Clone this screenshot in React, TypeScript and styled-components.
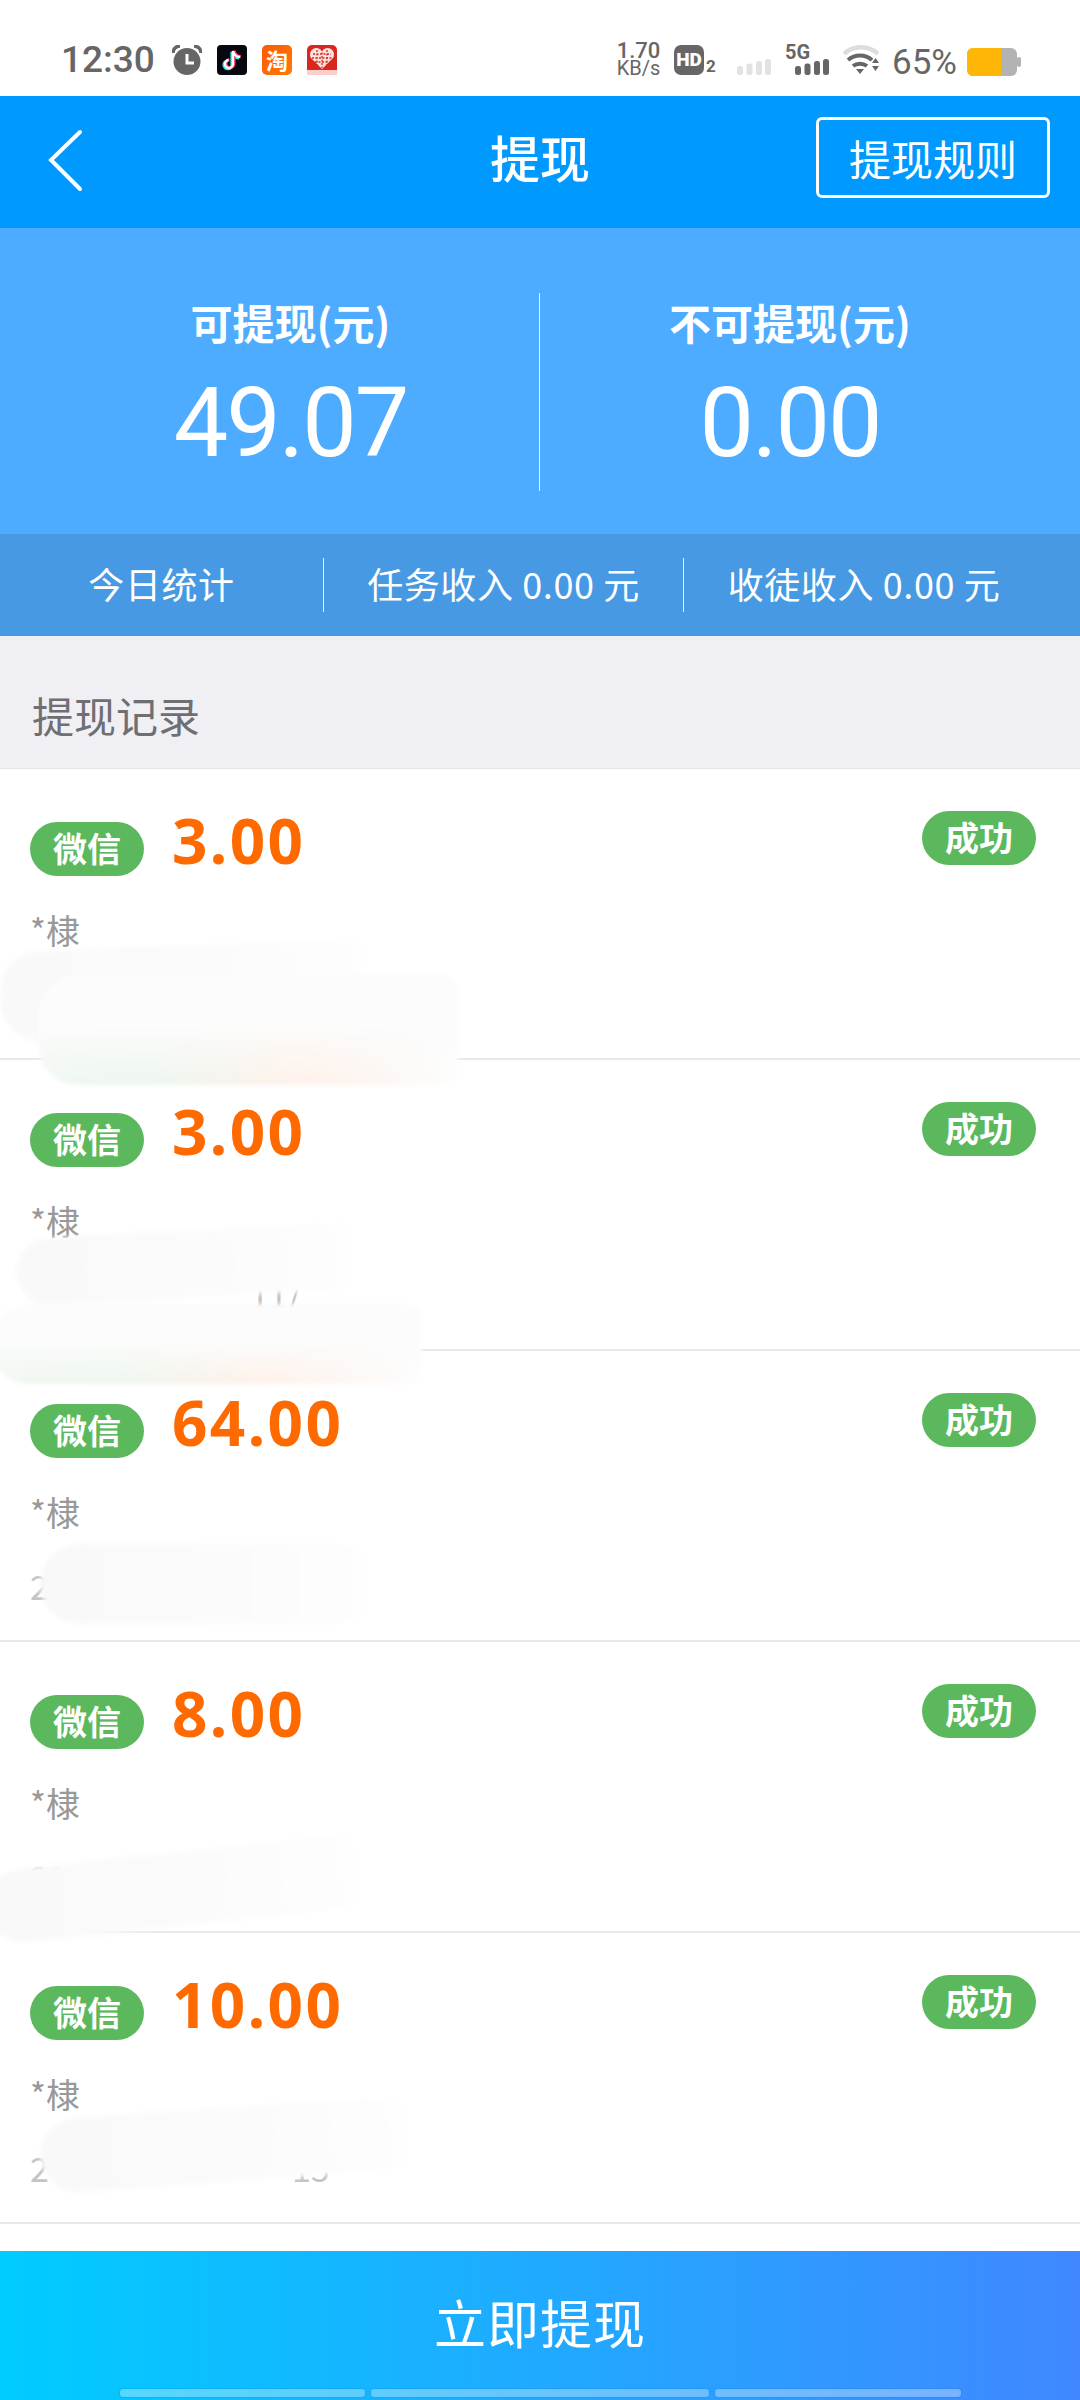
import styled, { createGlobalStyle } from "styled-components";

const CJK = `"Noto Sans CJK SC", "Noto Sans", sans-serif`;

const GlobalStyle = createGlobalStyle`
  html, body {
    margin: 0;
    padding: 0;
    background: #fff;
    font-family: ${CJK};
  }
  * { box-sizing: border-box; }
`;

const Page = styled.div`
  width: 1080px;
  height: 2400px;
  display: flex;
  flex-direction: column;
  overflow: hidden;
  background: #fff;
  position: relative;
`;

/* status bar */
const StatusBar = styled.div`
  height: 96px;
  padding: 45px 59px 0 61px;
  display: flex;
  align-items: flex-start;
  justify-content: space-between;
  color: #666;
`;

const StatusGroup = styled.div`
  height: 30px;
  display: flex;
  align-items: center;
`;

const Clock = styled.span`
  font: 500 37px/30px "Roboto", sans-serif;
  width: 111px;
`;

const Speed = styled.div`
  width: 45px;
  margin: -3px 13px 0 0;
  display: flex;
  flex-direction: column;
  align-items: center;
`;

const SpeedValue = styled.span`
  font: 500 22px/19px "Roboto", sans-serif;
`;

const SpeedUnit = styled.span`
  font: 400 20px/17px "Roboto", sans-serif;
`;

const HdWrap = styled.div`
  width: 42px;
  height: 30px;
  margin-right: 21px;
  display: flex;
`;

const HdBox = styled.div`
  width: 30px;
  height: 30px;
  border-radius: 7px;
  background: #666;
  color: #fff;
  font: 900 19px/30px "Roboto", sans-serif;
  text-align: center;
`;

const HdSub = styled.span`
  align-self: flex-end;
  font: 700 17px/17px "Roboto", sans-serif;
  margin-left: 2px;
`;

const GreyBars = styled.div`
  width: 35px;
  margin: 14px 13px 0 0;
`;

const FiveG = styled.div`
  width: 44px;
  height: 30px;
  margin-right: 14px;
  display: flex;
  flex-direction: column;
`;

const FiveGLabel = styled.span`
  font: 700 20px/15px "Roboto", sans-serif;
`;

const FiveGBars = styled.div`
  align-self: flex-end;
  width: 34px;
  height: 16px;
  margin-top: -1px;
`;

const BarsSvg = styled.svg`
  display: block;
  width: 34px;
  height: 16px;
`;

const WifiIcon = styled.svg`
  display: block;
  width: 36px;
  height: 30px;
  margin-right: 13px;
`;

const Percent = styled.span`
  font: 400 35px/30px "Roboto", sans-serif;
  width: 64px;
  margin: 6px 11px 0 0;
  white-space: nowrap;
`;

const BatteryIcon = styled.svg`
  display: block;
  width: 54px;
  height: 28px;
  margin-top: 3px;
`;

const AppIcon = styled.svg`
  display: block;
  width: 30px;
  height: 30px;
  margin-right: 15px;
`;

const TaobaoIcon = styled.div`
  width: 30px;
  height: 30px;
  margin-right: 15px;
  border-radius: 5px;
  background: linear-gradient(135deg, #fa5a00, #ff7a0a);
  color: #fff;
  font-size: 22px;
  font-weight: 700;
  line-height: 29px;
  text-align: center;
`;

/* nav */
const NavBar = styled.header`
  height: 132px;
  background: #0099ff;
  display: flex;
  align-items: center;
  justify-content: space-between;
  padding: 0 30px 0 48px;
  position: relative;
`;

const BackIcon = styled.svg`
  width: 36px;
  height: 64px;
  display: block;
  margin-top: -2px;
`;

const NavTitle = styled.h1`
  position: absolute;
  left: 0;
  right: 0;
  top: 30px;
  text-align: center;
  margin: 0;
  color: #fff;
  font-size: 50px;
  font-weight: 500;
  line-height: 60px;
`;

const RuleButton = styled.div`
  width: 234px;
  height: 81px;
  margin-bottom: 9px;
  border: 3px solid #fff;
  border-radius: 6px;
  color: #fff;
  font-size: 42px;
  display: flex;
  align-items: center;
  justify-content: center;
`;

/* summary */
const Summary = styled.section`
  height: 306px;
  background: #4dacff;
  display: grid;
  grid-template-columns: 539px 1px 1fr;
  padding-top: 65px;
  color: #fff;
  text-align: center;
`;

const SummaryCell = styled.div<{ $shift: number }>`
  display: flex;
  flex-direction: column;
  align-items: center;
  margin-top: -3px;
  transform: translateX(${({ $shift }) => $shift}px);
`;

const SummaryLabel = styled.div`
  font-size: 42px;
  line-height: 64px;
  font-weight: 700;
`;

const SummaryValue = styled.div`
  font: 400 97px/100px "Roboto", sans-serif;
  margin-top: 19px;
  letter-spacing: -2px;
`;

const SummaryDivider = styled.div`
  height: 198px;
  background: rgba(255, 255, 255, 0.85);
`;

const StatsBar = styled.section`
  height: 102px;
  background: #4699e2;
  display: flex;
  align-items: center;
  color: #fff;
  font-size: 36px;
`;

const StatCell = styled.div<{ $width: number; $pad?: number }>`
  width: ${({ $width }) => $width}px;
  height: 54px;
  padding-right: ${({ $pad }) => $pad ?? 0}px;
  padding-bottom: 5px;
  display: flex;
  align-items: center;
  justify-content: center;
  white-space: pre;
  letter-spacing: 0.6px;

  & + & {
    border-left: 1px solid rgba(255, 255, 255, 0.85);
  }
`;

const SectionHeader = styled.div`
  height: 133px;
  background: #efeff4;
  border-bottom: 1px solid #e4e4e8;
  padding: 24px 32px 0;
  display: flex;
  align-items: center;
  color: #6e6e73;
  font-size: 42px;
`;

/* rows */
const RecordList = styled.div`
  flex: 1;
`;

const Row = styled.div`
  height: 291px;
  border-bottom: 2px solid #e9e9ec;
  padding: 34px 44px 0 30px;
  display: flex;
  flex-direction: column;
`;

const RowTop = styled.div`
  display: flex;
  align-items: flex-start;
  justify-content: space-between;
`;

const RowLeft = styled.div`
  display: flex;
  align-items: flex-start;
`;

const Pill = styled.span<{ $offset: number }>`
  width: 114px;
  height: 54px;
  border-radius: 27px;
  background: #5cb85c;
  color: #fff;
  font-size: 34px;
  font-weight: 700;
  line-height: 52px;
  text-align: center;
  margin-top: ${({ $offset }) => $offset}px;
`;

const Amount = styled.span`
  font: 700 62px/70px "Noto Sans", sans-serif;
  color: #ff6a00;
  margin-left: 28px;
  margin-top: 2px;
  letter-spacing: 2.4px;
`;

const Name = styled.div`
  color: #999;
  font-size: 34px;
  line-height: 44px;
  margin-top: 32px;
`;

const Detail = styled.div`
  color: #c4c4c4;
  font-size: 34px;
  line-height: 44px;
  margin-top: 30px;
  height: 44px;
  display: flex;
`;

const DetailTail = styled.span<{ $left: number }>`
  position: absolute;
  left: ${({ $left }) => $left}px;
`;

/* blurred-out patches sitting over the rows */
const Smudge = styled.div<{ $x: number; $y: number; $w: number; $h: number; $tint?: boolean; $rotate?: number }>`
  position: absolute;
  left: ${({ $x }) => $x}px;
  top: ${({ $y }) => $y}px;
  width: ${({ $w }) => $w}px;
  height: ${({ $h }) => $h}px;
  border-radius: 40px 14px 14px 40px;
  filter: blur(2px);
  transform: rotate(${({ $rotate }) => $rotate ?? 0}deg);
  background: ${({ $tint }) =>
    $tint
      ? "linear-gradient(180deg, #fcfcfc 45%, rgba(252,252,252,0) 100%), linear-gradient(90deg, #f0f7f1 0%, #eef6ee 30%, #fff1e9 62%, #fdf5f0 78%, #fefefe 100%)"
      : "linear-gradient(90deg, #f9f9f9 0%, #fbfbfb 55%, #fefefe 100%)"};
`;

/* bottom button */
const CashButton = styled.div`
  position: absolute;
  left: 0;
  right: 0;
  top: 2251px;
  height: 149px;
  background: linear-gradient(90deg, #00ccff 0%, #4088ff 100%);
  display: flex;
  justify-content: center;
  color: #fff;
  font-size: 52px;
  line-height: 142px;
  letter-spacing: 1px;
`;

const HandleRow = styled.div`
  position: absolute;
  left: 120px;
  bottom: 3px;
  width: 841px;
  display: flex;
  gap: 6px;
`;

const Handle = styled.div<{ $flex: number }>`
  flex: ${({ $flex }) => $flex};
  height: 8px;
  border-radius: 3px;
  background: rgba(255, 255, 255, 0.32);
  box-shadow: 0 0 0 1px rgba(0, 70, 150, 0.1);
`;

const records = [
  { amount: "3.00", detail: "" },
  { amount: "3.00", detail: "", tail: "11/", tailLeft: 250 },
  { amount: "64.00", detail: "2" },
  { amount: "8.00", detail: "20" },
  { amount: "10.00", detail: "2", tail: "15", tailLeft: 292 },
];

const smudges = [
  { x: 0, y: 946, w: 365, h: 90, rotate: -2 },
  { x: 38, y: 975, w: 420, h: 110, tint: true },
  { x: 16, y: 1231, w: 335, h: 67, rotate: -3 },
  { x: -10, y: 1304, w: 432, h: 80, tint: true },
  { x: 40, y: 1544, w: 325, h: 80 },
  { x: -15, y: 1853, w: 372, h: 74, rotate: -6 },
  { x: 40, y: 2108, w: 365, h: 74, rotate: -4 },
];

const Bars = ({ color }: { color: string }) => (
  <BarsSvg viewBox="0 0 34 16">
    <rect x="0" y="7" width="6" height="9" rx="2.5" fill={color} />
    <rect x="9.5" y="4.5" width="6" height="11.5" rx="2.5" fill={color} />
    <rect x="19" y="2" width="6" height="14" rx="2.5" fill={color} />
    <rect x="28" y="0" width="6" height="16" rx="2.5" fill={color} />
  </BarsSvg>
);

const tiktokNote = "M16 6 V19 A4 4 0 1 1 11.5 15 M16 6 C17 10 20 12 23 12";

const App = () => (
  <Page>
    <GlobalStyle />
    <StatusBar>
      <StatusGroup>
        <Clock>12:30</Clock>
        <AppIcon viewBox="0 0 30 30">
          <path d="M1 8 C1 4 4 1 8 1 M29 8 C29 4 26 1 22 1" stroke="#666" strokeWidth="3.4" fill="none" />
          <circle cx="15" cy="16.5" r="13.5" fill="#666" />
          <path d="M15 9 V18 H22" stroke="#fff" strokeWidth="3" fill="none" />
        </AppIcon>
        <AppIcon viewBox="0 0 30 30">
          <rect width="30" height="30" rx="4" fill="#07070f" />
          <path d={tiktokNote} stroke="#25f4ee" strokeWidth="3.2" fill="none" transform="translate(-1 0.8)" />
          <path d={tiktokNote} stroke="#fe2c55" strokeWidth="3.2" fill="none" transform="translate(1 -0.4)" />
          <path d={tiktokNote} stroke="#fff" strokeWidth="2.4" fill="none" />
        </AppIcon>
        <TaobaoIcon>淘</TaobaoIcon>
        <AppIcon viewBox="0 0 30 30">
          <rect width="30" height="30" rx="5" fill="#d8281e" />
          <path d="M15 24 L4 13 A6 6 0 0 1 15 6 A6 6 0 0 1 26 13 Z" fill="#fbe3df" />
          <path d="M6 9 H24 M5 13 H25 M8 17 H22 M15 4 V23 M10 5 V20 M20 5 V20" stroke="#d8281e" strokeWidth="1.3" strokeDasharray="2 1.5" />
          <rect y="25" width="30" height="5" fill="#fbd0cc" />
        </AppIcon>
      </StatusGroup>
      <StatusGroup>
        <Speed>
          <SpeedValue>1.70</SpeedValue>
          <SpeedUnit>KB/s</SpeedUnit>
        </Speed>
        <HdWrap>
          <HdBox>HD</HdBox>
          <HdSub>2</HdSub>
        </HdWrap>
        <GreyBars>
          <Bars color="#e2e2e2" />
        </GreyBars>
        <FiveG>
          <FiveGLabel>5G</FiveGLabel>
          <FiveGBars>
            <Bars color="#666" />
          </FiveGBars>
        </FiveG>
        <WifiIcon viewBox="0 0 36 30">
          <path d="M1 9 C10 0 26 0 35 9" stroke="#ddd" strokeWidth="4.5" fill="none" />
          <path d="M5 15 C12 9 22 9 29 15" stroke="#666" strokeWidth="4" fill="none" />
          <path d="M10 21 C14 18 20 18 24 21" stroke="#666" strokeWidth="4" fill="none" />
          <path d="M13 24 H21 L17 29 Z" fill="#666" />
          <path d="M29 18 L32.5 13 L36 18 Z M29 21 H36 L32.5 26 Z" fill="#666" />
        </WifiIcon>
        <Percent>65%</Percent>
        <BatteryIcon viewBox="0 0 54 28">
          <rect x="0" y="0" width="50" height="28" rx="6" fill="#b3b3b3" />
          <path d="M6 0 H34 V28 H6 A6 6 0 0 1 0 22 V6 A6 6 0 0 1 6 0 Z" fill="#ffb607" />
          <rect x="50" y="9" width="4" height="10" rx="2" fill="#b3b3b3" />
        </BatteryIcon>
      </StatusGroup>
    </StatusBar>

    <NavBar>
      <BackIcon viewBox="0 0 36 64">
        <path d="M32 3 L3 31 L32 60" stroke="#fff" strokeWidth="4" fill="none" strokeLinecap="round" />
      </BackIcon>
      <NavTitle>提现</NavTitle>
      <RuleButton>提现规则</RuleButton>
    </NavBar>

    <Summary>
      <SummaryCell $shift={21}>
        <SummaryLabel>可提现(元)</SummaryLabel>
        <SummaryValue>49.07</SummaryValue>
      </SummaryCell>
      <SummaryDivider />
      <SummaryCell $shift={-20}>
        <SummaryLabel>不可提现(元)</SummaryLabel>
        <SummaryValue>0.00</SummaryValue>
      </SummaryCell>
    </Summary>

    <StatsBar>
      <StatCell $width={323}>今日统计</StatCell>
      <StatCell $width={360}>任务收入 0.00 元</StatCell>
      <StatCell $width={397} $pad={36}>收徒收入 0.00 元</StatCell>
    </StatsBar>

    <SectionHeader>提现记录</SectionHeader>

    <RecordList>
      {records.map((record, i) => (
        <Row key={i}>
          <RowTop>
            <RowLeft>
              <Pill $offset={19}>微信</Pill>
              <Amount>{record.amount}</Amount>
            </RowLeft>
            <Pill $offset={8}>成功</Pill>
          </RowTop>
          <Name>*棣</Name>
          <Detail>
            {record.detail}
            {record.tail && <DetailTail $left={record.tailLeft}>{record.tail}</DetailTail>}
          </Detail>
        </Row>
      ))}
    </RecordList>

    {smudges.map((s, i) => (
      <Smudge key={i} $x={s.x} $y={s.y} $w={s.w} $h={s.h} $tint={s.tint} $rotate={s.rotate} />
    ))}

    <CashButton>
      立即提现
      <HandleRow>
        <Handle $flex={245} />
        <Handle $flex={338} />
        <Handle $flex={246} />
      </HandleRow>
    </CashButton>
  </Page>
);

export default App;
